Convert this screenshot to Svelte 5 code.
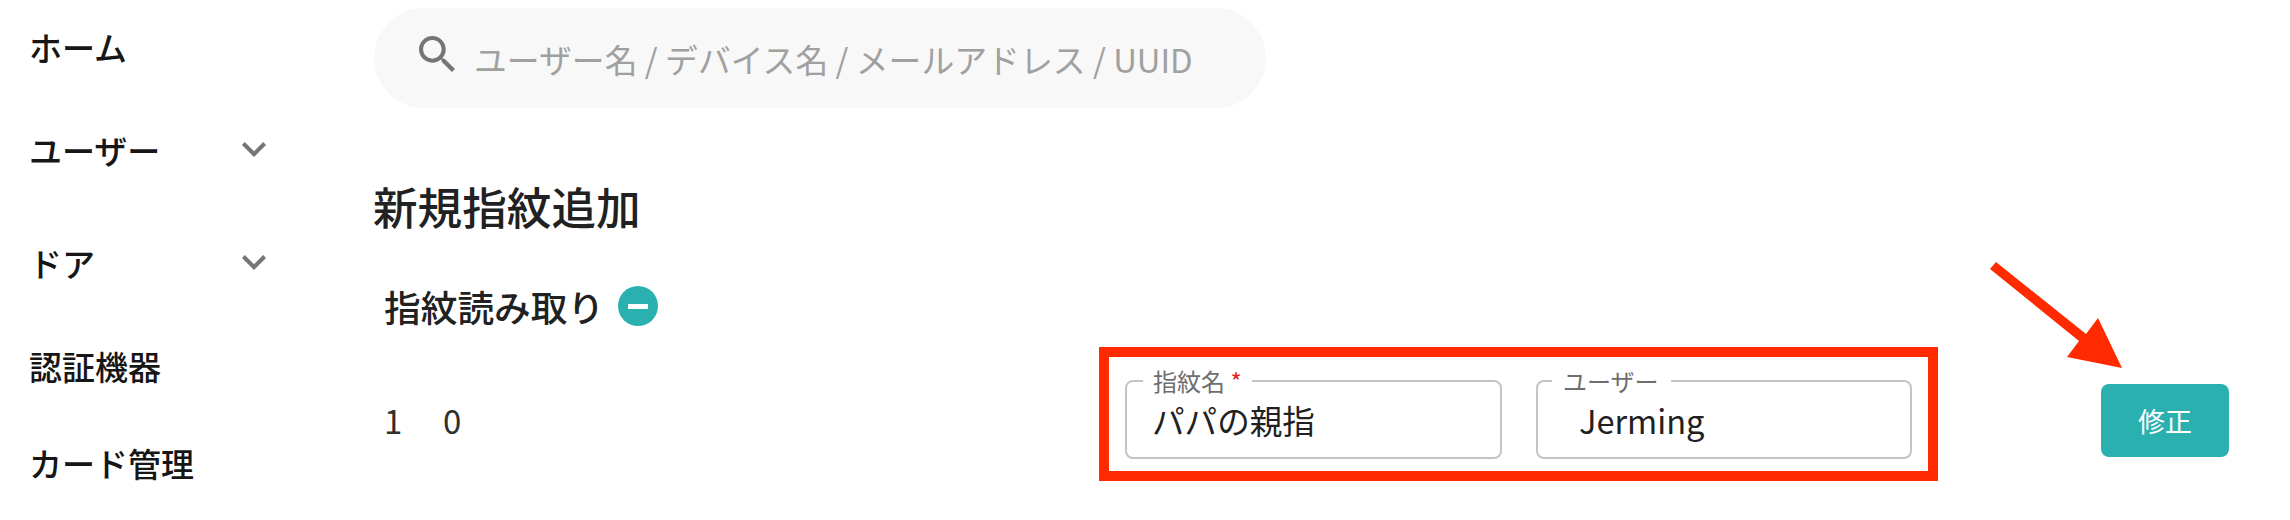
<script>
  const nav = [
    { label: 'ホーム', cls: 'h94' },
    { label: 'ユーザー', cls: 'h112', more: true },
    { label: 'ドア', cls: 'h114', more: true },
    { label: '認証機器', cls: 'h92' },
    { label: 'カード管理', cls: 'h102' }
  ];
</script>

<div class="page">
  <nav class="side">
    {#each nav as item}
      <div class="item {item.cls}">
        <span>{item.label}</span>
        {#if item.more}
          <svg class="chev" viewBox="6 8.59 12 7.41" aria-hidden="true"><path d="M16.59 8.59 12 13.17 7.41 8.59 6 10l6 6 6-6z" /></svg>
        {/if}
      </div>
    {/each}
  </nav>

  <main class="main">
    <div class="search">
      <svg class="mag" viewBox="3 3 17.5 17.5" aria-hidden="true"><path d="M15.5 14h-.79l-.28-.27C15.41 12.59 16 11.11 16 9.5 16 5.91 13.09 3 9.5 3S3 5.91 3 9.5 5.91 16 9.5 16c1.61 0 3.09-.59 4.23-1.57l.27.28v.79l5 4.99L20.49 19l-4.99-5zm-6 0C7.01 14 5 11.99 5 9.5S7.01 5 9.5 5 14 7.01 14 9.5 11.99 14 9.5 14z" /></svg>
      <input placeholder="ユーザー名 / デバイス名 / メールアドレス / UUID" />
    </div>

    <h1>新規指紋追加</h1>

    <div class="sub">
      <h2>指紋読み取り</h2>
      <span class="minus"><i></i></span>
    </div>

    <div class="row">
      <div class="ids"><span>1</span><span>0</span></div>
      <div class="mark">
        <fieldset class="first">
          <legend>指紋名 <b>*</b></legend>
          <input value="パパの親指" readonly />
        </fieldset>
        <fieldset class="second">
          <legend>ユーザー</legend>
          <input value="Jerming" readonly />
        </fieldset>
      </div>
      <button>修正</button>
    </div>
  </main>

  <svg class="arrow" viewBox="0 0 150 120" aria-hidden="true">
    <path d="M7 2 97 74 109 58 133 108 78 97 90 81 1 9z" />
  </svg>
</div>

<style>
  :global(body) {
    margin: 0;
    background: #fff;
  }
  .page {
    position: relative;
    display: flex;
    width: 2290px;
    height: 520px;
    overflow: hidden;
    font-family: "Noto Sans CJK JP", "Noto Sans", sans-serif;
    color: #212121;
  }
  .side {
    flex: 0 0 374px;
    display: flex;
    flex-direction: column;
  }
  .item {
    display: flex;
    align-items: center;
    justify-content: space-between;
    width: 237px;
    padding-left: 29px;
    font-size: 33px;
    font-weight: 500;
    color: #161616;
  }
  .h94 { height: 94px; }
  .h112 { height: 112px; }
  .h114 { height: 114px; }
  .h92 { height: 92px; }
  .h102 { height: 102px; }
  .chev {
    width: 24px;
    height: 15px;
    margin-top: -2px;
    fill: #757575;
  }
  .main {
    flex: 1;
    min-width: 0;
    padding-top: 8px;
    padding-right: 61px;
  }
  .search {
    display: flex;
    align-items: center;
    gap: 19px;
    box-sizing: border-box;
    width: 892px;
    height: 100px;
    padding: 0 45px;
    border-radius: 50px;
    background: #f8f8f8;
  }
  .mag {
    flex: none;
    width: 36px;
    height: 36px;
    margin-top: -8px;
    fill: #757575;
  }
  .search input {
    flex: 1;
    min-width: 0;
    padding: 0;
    border: 0;
    outline: 0;
    background: none;
    font: 400 32.85px "Noto Sans CJK JP", "Noto Sans", sans-serif;
    color: #212121;
  }
  .search input::placeholder {
    color: #a0a0a0;
    opacity: 1;
  }
  h1 {
    margin: 70px 0 0 -1px;
    font-size: 44.6px;
    line-height: 56px;
    font-weight: 500;
    color: #212121;
  }
  .sub {
    display: flex;
    align-items: center;
    gap: 14px;
    margin-top: 50px;
    padding-left: 10px;
    height: 44px;
  }
  h2 {
    margin: 0;
    font-size: 36.7px;
    line-height: 44px;
    font-weight: 500;
  }
  .minus {
    display: flex;
    align-items: center;
    justify-content: center;
    width: 40px;
    height: 40px;
    border-radius: 50%;
    background: #2bb0b0;
  }
  .minus i {
    width: 20px;
    height: 5px;
    background: #fff;
  }
  .row {
    display: flex;
    align-items: center;
    margin-top: 19px;
    padding-left: 10px;
  }
  .ids {
    display: flex;
    flex: 0 0 715px;
    margin-top: 11px;
    font-size: 33px;
    line-height: 44px;
    color: #303030;
  }
  .ids span {
    width: 59px;
  }
  .mark {
    display: flex;
    gap: 34px;
    box-sizing: border-box;
    flex: 0 0 839px;
    height: 134px;
    padding: 12px 16px;
    border: 10px solid #ff2a00;
  }
  fieldset {
    box-sizing: border-box;
    width: 377px;
    height: 90px;
    margin: 0;
    padding: 0 0 0 25px;
    border: 2px solid #c4c4c4;
    border-radius: 8px;
    min-width: 0;
  }
  fieldset.second {
    width: 376px;
    padding-left: 41px;
  }
  legend {
    margin-left: 0;
    padding: 0 10px 0 0;
    font-size: 24px;
    line-height: 24px;
    color: #6e6e6e;
    white-space: nowrap;
  }
  .first legend {
    margin-left: -9px;
    padding-left: 10px;
  }
  .second legend {
    margin-left: -27px;
    padding-left: 11px;
    padding-right: 12px;
  }
  legend b {
    font-weight: 400;
    color: #e62020;
  }
  fieldset input {
    display: block;
    width: 100%;
    height: 52px;
    padding: 0;
    border: 0;
    outline: 0;
    background: none;
    font: 400 32.6px "Noto Sans CJK JP", "Noto Sans", sans-serif;
    color: #212121;
  }
  button {
    flex: none;
    width: 128px;
    height: 73px;
    margin-top: 13px;
    margin-left: 163px;
    border: 0;
    border-radius: 8px;
    background: #2bb0b0;
    color: #fff;
    font: 400 27px "Noto Sans CJK JP", "Noto Sans", sans-serif;
  }
  .arrow {
    position: absolute;
    left: 1989px;
    top: 260px;
    width: 150px;
    height: 120px;
    overflow: visible;
    fill: #ff2a00;
  }
</style>
